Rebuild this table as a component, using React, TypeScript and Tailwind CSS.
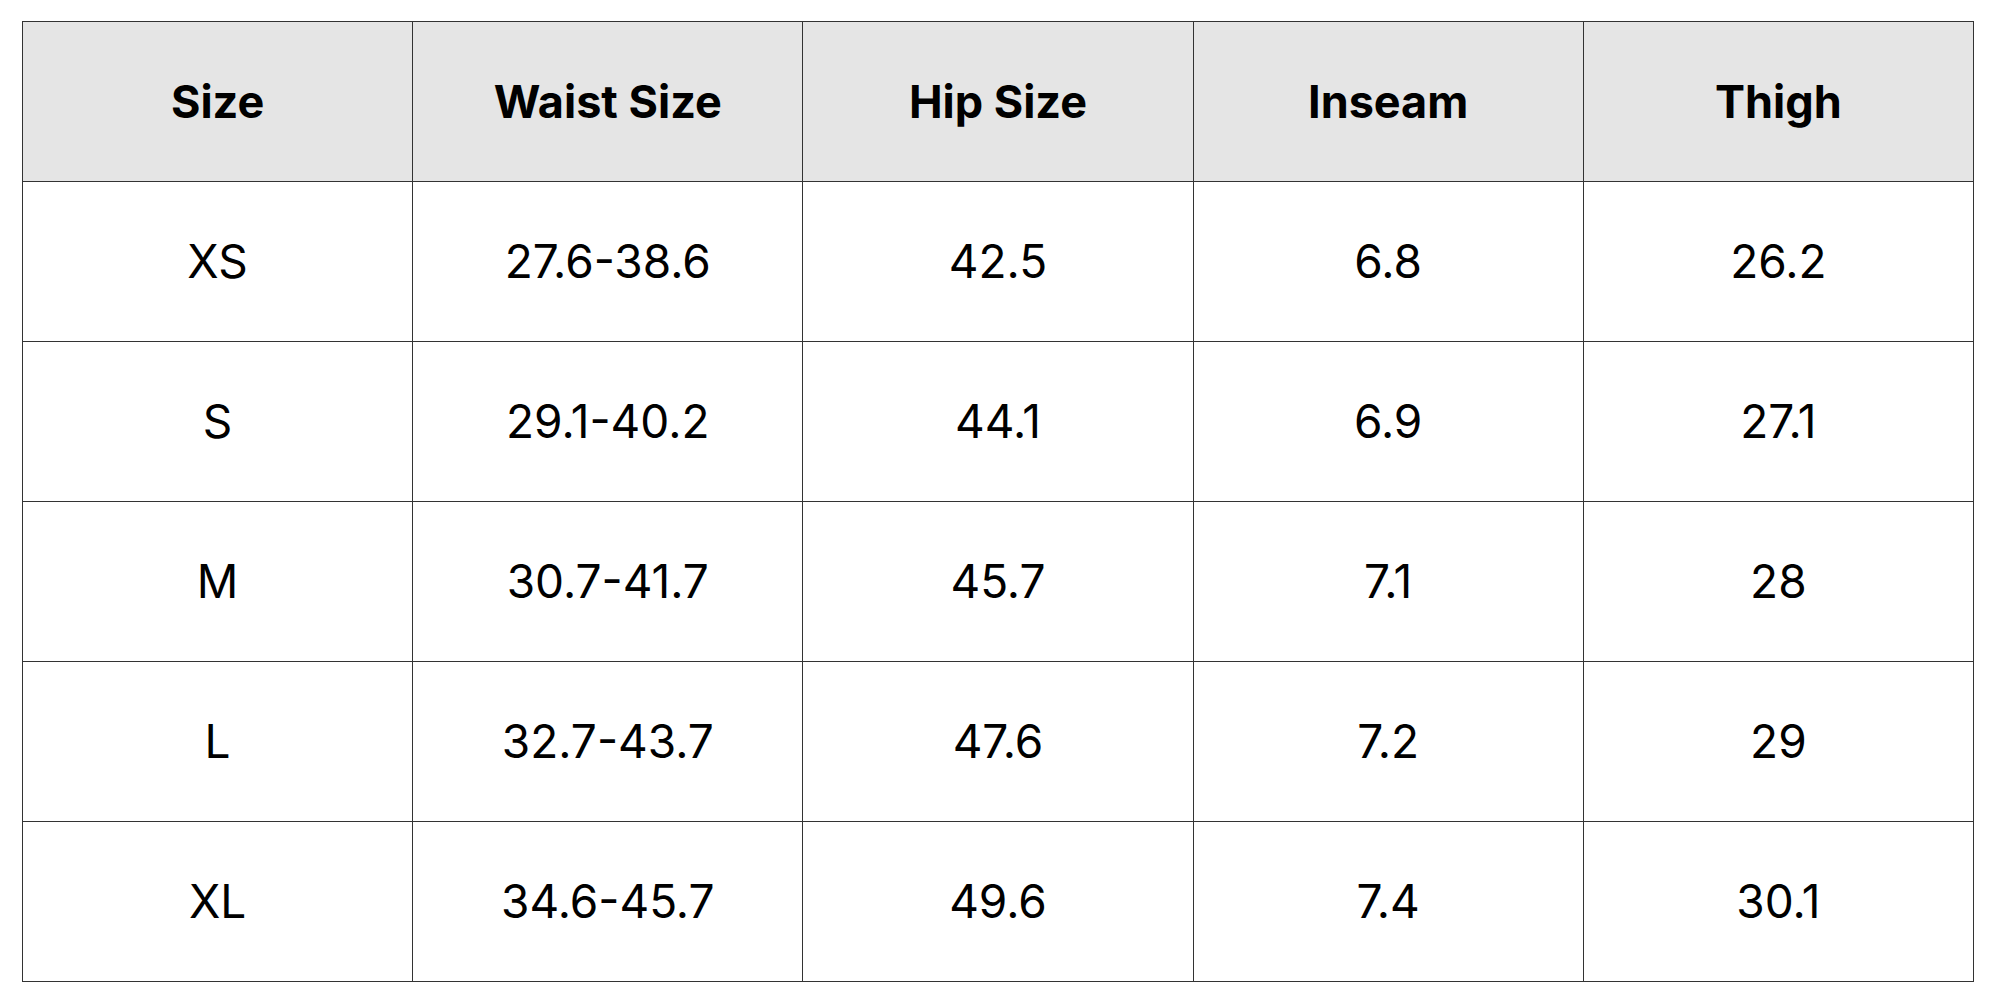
const headers = ['Size', 'Waist Size', 'Hip Size', 'Inseam', 'Thigh'];

const rows = [
  ['XS', '27.6-38.6', '42.5', '6.8', '26.2'],
  ['S', '29.1-40.2', '44.1', '6.9', '27.1'],
  ['M', '30.7-41.7', '45.7', '7.1', '28'],
  ['L', '32.7-43.7', '47.6', '7.2', '29'],
  ['XL', '34.6-45.7', '49.6', '7.4', '30.1'],
];

export default function App() {
  return (
    <div className="min-h-screen bg-white pl-[22px] pt-[21px] font-['Inter',sans-serif] text-black">
      <table className="w-[1952px] table-fixed border-collapse border border-[#333]">
        <thead>
          <tr className="bg-[#e5e5e5]">
            {headers.map((h) => (
              <th
                key={h}
                className="h-[160px] border border-[#333] text-center text-[45px] font-bold"
              >
                {h}
              </th>
            ))}
          </tr>
        </thead>
        <tbody>
          {rows.map((r) => (
            <tr key={r[0]}>
              {r.map((c, i) => (
                <td
                  key={i}
                  className="h-[160px] border border-[#333] text-center text-[46px] font-normal"
                >
                  {c}
                </td>
              ))}
            </tr>
          ))}
        </tbody>
      </table>
    </div>
  );
}
